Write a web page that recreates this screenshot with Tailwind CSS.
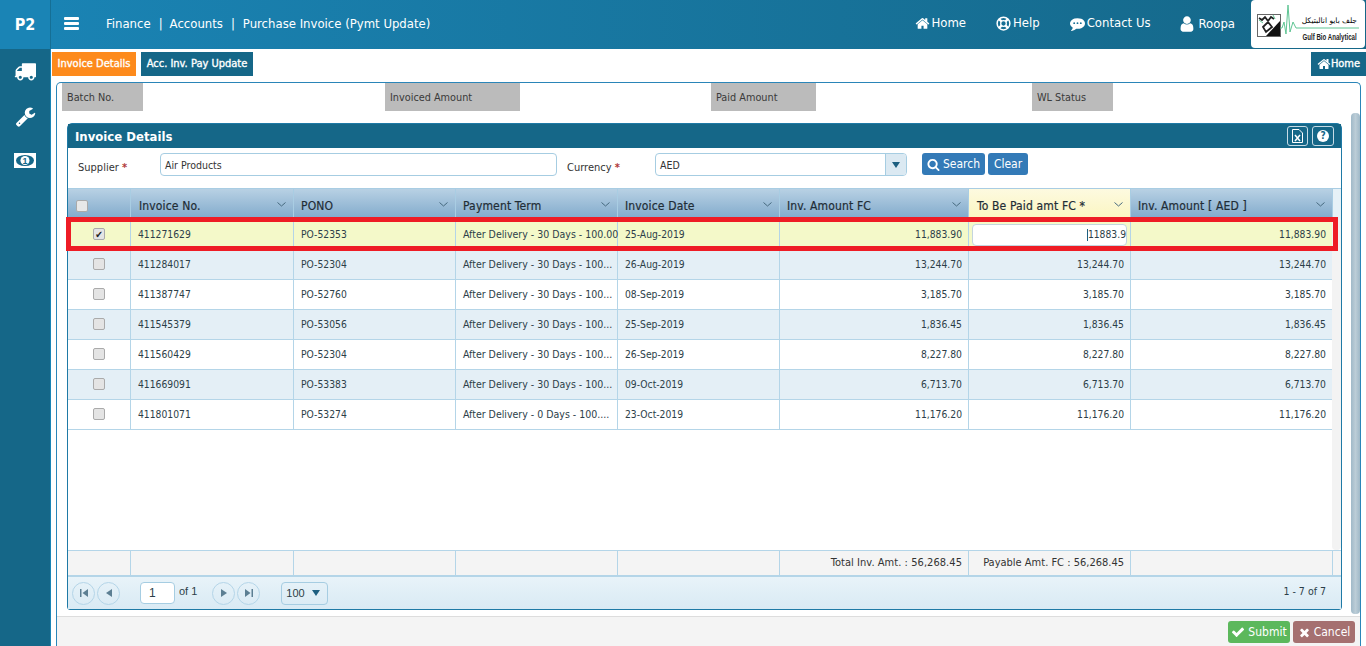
<!DOCTYPE html>
<html lang="en">
<head>
    <meta charset="UTF-8">
    <title>Purchase Invoice (Pymt Update)</title>
    <script src="https://cdn.jsdelivr.net/npm/@tailwindcss/browser@4"></script>
</head>
<body class="h-screen w-screen overflow-hidden bg-white text-[#333] text-[11px] font-['DejaVu_Sans_Condensed','Noto_Sans',sans-serif]">
    <!-- Top bar -->
    <nav class="h-[49px] flex items-stretch text-white bg-gradient-to-r from-[#1a84b5] to-[#156788]">
        <div class="w-[51px] shrink-0 flex items-center justify-center bg-[#1a84b5] border-r border-[#156f95] text-[16px] font-bold">P2</div>
        <svg class="w-[15px] h-[13px] ml-[13px] mt-[17px]" viewBox="0 0 15 13" fill="white"><rect width="15" height="3" rx="1"/><rect y="5" width="15" height="3" rx="1"/><rect y="10" width="15" height="3" rx="1"/></svg>
        <div class="ml-[27px] flex items-center text-[13px] gap-[8px] pb-[1px]">
            <span>Finance</span><span>|</span><span class="-ml-[1px]">Accounts</span><span>|</span><span>Purchase Invoice (Pymt Update)</span>
        </div>
        <div class="ml-auto flex items-center text-[13px] pb-[3px]">
            <svg class="w-[15px] h-[15px]" viewBox="0 0 1792 1792" fill="white"><path d="M1472 992v480q0 26-19 45t-45 19h-384v-384h-256v384h-384q-26 0-45-19t-19-45v-480q0-1 .5-3t.5-3l575-474 575 474q1 2 1 6zm223-69l-62 74q-8 9-21 11h-3q-13 0-21-7l-692-577-692 577q-12 8-24 7-13-2-21-11l-62-74q-8-10-7-23.500t11-21.500l719-599q32-26 76-26t76 26l244 204v-195q0-14 9-23t23-9h192q14 0 23 9t9 23v408l219 182q10 8 11 21.500t-7 23.500z"/></svg>
            <span class="ml-[1px]">Home</span>
            <svg class="w-[15px] h-[15px] ml-[30px]" viewBox="0 0 16 16" fill="none" stroke="white"><circle cx="8" cy="8" r="6.800" stroke-width="1.600"/><circle cx="8" cy="8" r="3" stroke-width="1.400"/><path d="M3.200 3.200L5.800 5.800M12.800 3.200L10.200 5.800M3.200 12.800L5.800 10.200M12.800 12.800L10.200 10.200" stroke-width="2.600"/></svg>
            <span class="ml-[2px]">Help</span>
            <svg class="w-[15px] h-[15px] ml-[30px]" viewBox="0 0 1792 1792"><path fill="white" d="M1792 896q0 174-120 321.500t-326 233-450 85.500q-70 0-145-8-198 175-460 242-49 14-114 22-17 2-30.500-9t-17.500-29v-1q-3-4-.5-12t2-10 4.500-9.500l6-9 7-8.500 8-9q7-8 31-34.500t34.500-38 31-39.500 32.500-51 27-59 26-76q-157-89-247.500-220t-90.500-281q0-130 71-248.500t191-204.500 286-136.500 348-50.500q244 0 450 85.500t326 233 120 321.500z"/><circle cx="500" cy="860" r="110" fill="#166f94"/><circle cx="896" cy="860" r="110" fill="#166f94"/><circle cx="1292" cy="860" r="110" fill="#166f94"/></svg>
            <span class="ml-[2px]">Contact Us</span>
            <svg class="w-[14px] h-[16px] ml-[29px] mt-[2px]" viewBox="200 100 1400 1600" fill="white"><path d="M1536 1399q0 109-62.500 187t-150.500 78h-854q-88 0-150.500-78t-62.500-187q0-85 8.500-160.500t31.500-152 58.500-131 94-89 134.500-34.500q131 128 313 128t313-128q76 0 134.500 34.500t94 89 58.500 131 31.500 152 8.500 160.500zm-256-887q0 159-112.500 271.500t-271.500 112.500-271.500-112.500-112.500-271.500 112.500-271.500 271.500-112.500 271.500 112.500 112.500 271.500z"/></svg>
            <span class="ml-[5px] mt-[2px] mr-[16px]">Roopa</span>
        </div>
        <!-- Logo -->
        <div class="w-[114px] h-[48px] mr-[1px] bg-white rounded-[4px] relative overflow-hidden">
            <svg class="w-[114px] h-[48px] absolute left-0 top-0" viewBox="0 0 114 48" fill="none">
                <rect x="6.500" y="14.500" width="23" height="22" fill="white" stroke="#666"/>
                <path d="M15 36L29 21V36Z" fill="#111"/>
                <path d="M8 18l3 2 3-3 3 4 3-4 3 2M12 27l5-5 4 5-6 5z" stroke="#222" stroke-width="1.800"/>
                <path d="M8 20l4 3M22 15l2 4" stroke="#5fc594"/>
                <path d="M29 28H31L33 22 35 34 37 5 39 32 42 22 45 28H108" stroke="#5fc594"/>
            </svg>
            <span class="absolute right-[8px] top-[16px] text-[7.500px] leading-[10px] text-black whitespace-nowrap font-['DejaVu_Sans',sans-serif]">جلف بايو انالبتيكل</span>
            <span class="absolute right-[8px] top-[31px] text-[9px] leading-[12px] text-[#222] font-bold whitespace-nowrap scale-x-[.68] origin-right font-['Liberation_Sans',sans-serif]">Gulf Bio Analytical</span>
        </div>
    </nav>

    <div class="flex h-[597px]">
        <!-- Side icons -->
        <aside class="w-[51px] shrink-0 bg-[#156788] border-r border-[#1a84b5] flex flex-col items-center">
            <svg class="w-[22px] h-[22px] mt-[11px]" viewBox="0 0 1792 1792" fill="white"><path d="M640 1408q0-52-38-90t-90-38-90 38-38 90 38 90 90 38 90-38 38-90zm-384-512h384v-256h-158q-13 0-22 9l-195 195q-9 9-9 22v30zm1280 512q0-52-38-90t-90-38-90 38-38 90 38 90 90 38 90-38 38-90zm256-1088v1024q0 15-4 26.500t-13.500 18.500-16.500 11.500-23.500 6-22.500 2-25.500 0-22.500-.5q0 106-75 181t-181 75-181-75-75-181h-384q0 106-75 181t-181 75-181-75-75-181h-64q-3 0-22.500.5t-25.500 0-22.500-2-23.500-6-16.500-11.500-13.500-18.500-4-26.500q0-26 19-45t45-19v-320q0-8-.5-35t0-38 2.500-34.500 6.500-37 14-30.500 22.500-30l198-198q19-19 50.500-32t58.500-13h160v-192q0-26 19-45t45-19h1024q26 0 45 19t19 45z"/></svg>
            <svg class="w-[21px] h-[21px] mt-[24px]" viewBox="0 0 1792 1792" fill="white"><path d="M448 1472q0-26-19-45t-45-19-45 19-19 45 19 45 45 19 45-19 19-45zm644-420l-682 682q-37 37-90 37-52 0-91-37l-106-108q-38-36-38-90 0-53 38-91l681-681q39 98 114.500 173.500t173.500 114.500zm634-435q0 39-23 106-47 134-164.500 217.500t-258.500 83.500q-185 0-316.500-131.500t-131.500-316.500 131.500-316.500 316.500-131.500q58 0 121.500 16.500t107.500 46.500q16 11 16 28t-16 28l-293 169v224l193 107q5-3 79-48.500t135.500-81 70.500-35.500q15 0 23.500 10t8.500 25z"/></svg>
            <svg class="w-[22px] h-[15px] mt-[26px]" viewBox="0 0 22 15"><rect width="22" height="15" fill="white"/><ellipse cx="11" cy="7.500" rx="9" ry="5.500" fill="#156788"/><circle cx="11" cy="7.500" r="4.500" fill="white"/><text x="11" y="11" text-anchor="middle" font-size="9" font-weight="700" fill="#156788" font-family="Liberation Sans">1</text></svg>
        </aside>

        <main class="flex-1 min-w-0 pt-[3px] relative">
            <!-- Tabs -->
            <div class="flex h-[24px] pl-[1px] text-white text-[11px] whitespace-nowrap [-webkit-text-stroke:0.35px_white]">
                <div class="w-[84px] bg-[#fd8a1c] flex items-center justify-center">Invoice Details</div>
                <div class="w-[112px] ml-[5px] bg-[#156788] flex items-center justify-center">Acc. Inv. Pay Update</div>
                <div class="w-[55px] ml-auto bg-[#156788] flex items-center justify-center">
                    <svg class="w-[14px] h-[14px]" viewBox="0 0 1792 1792" fill="white"><path d="M1472 992v480q0 26-19 45t-45 19h-384v-384h-256v384h-384q-26 0-45-19t-19-45v-480q0-1 .5-3t.5-3l575-474 575 474q1 2 1 6zm223-69l-62 74q-8 9-21 11h-3q-13 0-21-7l-692-577-692 577q-12 8-24 7-13-2-21-11l-62-74q-8-10-7-23.500t11-21.500l719-599q32-26 76-26t76 26l244 204v-195q0-14 9-23t23-9h192q14 0 23 9t9 23v408l219 182q10 8 11 21.500t-7 23.500z"/></svg>
                    <span>Home</span>
                </div>
            </div>

            <!-- Outer panel -->
            <div class="mt-[6px] ml-[5px] w-[1305px] h-[564px] border border-[#2a85b8] border-b-0 rounded-t-[5px] relative">
                <!-- Scrollbar -->
                <div class="absolute right-[0px] top-[30px] w-[9px] h-[501px] rounded-[4px] bg-gradient-to-r from-[#a0b9c8] via-[#bccdd7] to-[#a0b9c8]"></div>

                <div class="grid grid-cols-[323px_326px_321px_200px] pl-[5px] h-[28px] text-[10.800px] text-[#3a3a3a]">
                    <div class="w-[81px] bg-[#bbbbbb] pl-[5px] pt-[2px] flex items-center">Batch No.</div>
                    <div class="w-[135px] bg-[#bbbbbb] pl-[5px] pt-[2px] flex items-center">Invoiced Amount</div>
                    <div class="w-[105px] bg-[#bbbbbb] pl-[5px] pt-[2px] flex items-center">Paid Amount</div>
                    <div class="w-[81px] bg-[#bbbbbb] pl-[5px] pt-[2px] flex items-center">WL Status</div>
                </div>

                <!-- Card -->
                <div class="mt-[12px] ml-[10px] w-[1275px] h-[487px] border border-[#1f7aa6] rounded-t-[5px] rounded-b-[3px] relative flex flex-col">
                    <div class="h-[24px] shrink-0 bg-[#156788] text-white text-[13px] font-bold flex items-center pl-[7px]">
                        <span class="mt-[1px]">Invoice Details</span>
                        <div class="ml-auto mr-[7px] flex gap-[4px]">
                            <div class="w-[21px] h-[20px] border border-[#c6dbe6] rounded-[3px] flex items-center justify-center">
                                <svg class="w-[11px] h-[14px]" viewBox="0 0 11 14" fill="none" stroke="white"><path d="M1 .5H7L10.500 4V13.500H.5V.5Z"/><path d="M3 6l5 6M8 6l-5 6" stroke-width="1.500"/></svg>
                            </div>
                            <div class="w-[22px] h-[20px] border border-[#c6dbe6] rounded-[3px] flex items-center justify-center">
                                <span class="w-[12px] h-[12px] rounded-full bg-white text-[#156788] text-[10px] leading-[12px] text-center font-bold">?</span>
                            </div>
                        </div>
                    </div>

                    <!-- Filter row -->
                    <div class="h-[40px] shrink-0 flex pt-[5px] relative">
                        <span class="ml-[10px] w-[82px] mt-[7px]">Supplier <b class="text-[#b03a3a]">*</b></span>
                        <div class="w-[397px] h-[23px] border border-[#a6cde2] rounded-[4px] pl-[4px] pt-[2px] flex items-center text-[10.500px]">Air Products</div>
                        <span class="ml-[10px] w-[88px] mt-[7px]">Currency <b class="text-[#b03a3a]">*</b></span>
                        <div class="w-[252px] h-[23px] border border-[#a6cde2] rounded-[4px] pl-[4px] pt-[2px] flex items-center relative text-[10.500px]">
                            AED
                            <div class="absolute right-0 top-0 bottom-0 w-[21px] bg-[#dbe9f2] border-l border-[#a6cde2] flex items-center justify-center rounded-r-[3px]">
                                <span class="w-0 h-0 border-x-[4px] border-x-transparent border-t-[6px] border-t-[#1d5f80]"></span>
                            </div>
                        </div>
                        <div class="ml-[15px] w-[63px] h-[22px] bg-[#337ab7] rounded-[3px] text-white text-[12px] flex items-center justify-center gap-[3px]">
                            <svg class="w-[13px] h-[13px]" viewBox="0 0 1792 1792" fill="white"><path d="M1216 832q0-185-131.500-316.500t-316.500-131.500-316.500 131.500-131.500 316.500 131.500 316.500 316.500 131.500 316.500-131.500 131.500-316.500zm512 832q0 52-38 90t-90 38q-54 0-90-38l-343-342q-179 124-399 124-143 0-273.500-55.500t-225-150-150-225-55.500-273.500 55.500-273.500 150-225 225-150 273.500-55.500 273.500 55.500 225 150 150 225 55.500 273.500q0 220-124 399l343 343q37 37 37 90z"/></svg>
                            Search
                        </div>
                        <div class="ml-[3px] w-[40px] h-[22px] bg-[#337ab7] rounded-[3px] text-white text-[12px] flex items-center justify-center">Clear</div>
                    </div>

                    <!-- Grid -->
                    <div class="flex-1 relative flex flex-col min-h-0">
                        <div class="grid grid-cols-[63px_163px_162px_162px_162px_189px_162px_202px_1fr] h-[32px] shrink-0 text-[12px] tracking-[.15px] text-[#1f2d36] [-webkit-text-stroke:0.2px_#1f2d36] bg-gradient-to-b from-[#b8d1e4] to-[#7ea8ca] border-t border-[#a9cde3] [&>div]:pt-[2px]">
                            <div class="border-r border-[#a9cde3] flex items-center pl-[8px]"><span class="w-[12px] h-[12px] rounded-[2px] border border-[#aaa] bg-[#e8e8e8]"></span></div>
                            <div class="border-r border-[#a9cde3] flex items-center pl-[8px] justify-between pr-[7px]">Invoice No.<svg class="w-[9px] h-[5px] mb-[3px]" viewBox="0 0 9 5" fill="none" stroke="#47697f"><path d="M.5.5L4.500 4 8.500.5"/></svg></div>
                            <div class="border-r border-[#a9cde3] flex items-center pl-[7px] justify-between pr-[7px]">PONO<svg class="w-[9px] h-[5px] mb-[3px]" viewBox="0 0 9 5" fill="none" stroke="#47697f"><path d="M.5.5L4.500 4 8.500.5"/></svg></div>
                            <div class="border-r border-[#a9cde3] flex items-center pl-[7px] justify-between pr-[7px]">Payment Term<svg class="w-[9px] h-[5px] mb-[3px]" viewBox="0 0 9 5" fill="none" stroke="#47697f"><path d="M.5.5L4.500 4 8.500.5"/></svg></div>
                            <div class="border-r border-[#a9cde3] flex items-center pl-[7px] justify-between pr-[7px]">Invoice Date<svg class="w-[9px] h-[5px] mb-[3px]" viewBox="0 0 9 5" fill="none" stroke="#47697f"><path d="M.5.5L4.500 4 8.500.5"/></svg></div>
                            <div class="border-r border-[#a9cde3] flex items-center pl-[7px] justify-between pr-[7px]">Inv. Amount FC<svg class="w-[9px] h-[5px] mb-[3px]" viewBox="0 0 9 5" fill="none" stroke="#47697f"><path d="M.5.5L4.500 4 8.500.5"/></svg></div>
                            <div class="border-r border-[#a9cde3] flex items-center pl-[8px] justify-between pr-[7px] bg-gradient-to-b from-[#fdfae0] to-[#fbf5bf]">To Be Paid amt FC *<svg class="w-[9px] h-[5px] mb-[3px]" viewBox="0 0 9 5" fill="none" stroke="#47697f"><path d="M.5.5L4.500 4 8.500.5"/></svg></div>
                            <div class="border-r border-[#a9cde3] flex items-center pl-[7px] justify-between pr-[7px]">Inv. Amount [ AED ]<svg class="w-[9px] h-[5px] mb-[3px]" viewBox="0 0 9 5" fill="none" stroke="#47697f"><path d="M.5.5L4.500 4 8.500.5"/></svg></div>
                            <div class="bg-[#e6f1f7]"></div>
                        </div>

                        <div class="flex-1 relative">
                            <!-- Grid scrollbar -->
                            <div class="absolute right-0 top-0 bottom-0 w-[9px] bg-[#f3f3f3] rounded-b-[4px]"></div>
                            <div class="w-[1265px] text-[10.250px] text-[#2c3e48]">
                                <div class="grid grid-cols-[63px_163px_162px_162px_162px_189px_162px_202px] h-[30px] items-stretch bg-[#f4f9c9] border-b border-[#b4d5e8] [&>div]:border-r [&>div]:border-[#b4d5e8] [&>div]:flex [&>div]:items-center [&>div]:pl-[7px] [&>div]:pt-[1px]">
                                    <div class="justify-center pl-[0px]! pt-0! pb-[1px]"><span class="w-[12px] h-[12px] rounded-[2px] border border-[#aaa] bg-[#e4e4e4] text-[10px] leading-[11px] text-center text-[#222]">✔</span></div>
                                    <div>411271629</div><div>PO-52353</div><div class="whitespace-nowrap text-[10.500px]">After Delivery - 30 Days - 100.00</div><div>25-Aug-2019</div>
                                    <div class="justify-end pr-[6px]">11,883.90</div>
                                    <div class="px-[3px]! pt-0!"><div class="w-full h-[22px] bg-white border border-[#c4d5de] rounded-[4px] flex items-center justify-end"><span class="w-px h-[12px] bg-[#1d5f80]"></span>11883.9</div></div>
                                    <div class="justify-end pr-[6px]">11,883.90</div>
                                </div>
                                <div class="grid grid-cols-[63px_163px_162px_162px_162px_189px_162px_202px] h-[30px] items-stretch bg-[#e4eff6] border-b border-[#b4d5e8] [&>div]:border-r [&>div]:border-[#b4d5e8] [&>div]:flex [&>div]:items-center [&>div]:pl-[7px] [&>div]:pt-[1px]">
                                    <div class="justify-center pl-[0px]! pt-0! pb-[1px]"><span class="w-[12px] h-[12px] rounded-[2px] border border-[#aaa] bg-[#e4e4e4]"></span></div>
                                    <div>411284017</div><div>PO-52304</div><div class="whitespace-nowrap text-[10.500px]">After Delivery - 30 Days - 100...</div><div>26-Aug-2019</div>
                                    <div class="justify-end pr-[6px]">13,244.70</div><div class="justify-end pr-[6px]">13,244.70</div><div class="justify-end pr-[6px]">13,244.70</div>
                                </div>
                                <div class="grid grid-cols-[63px_163px_162px_162px_162px_189px_162px_202px] h-[30px] items-stretch bg-white border-b border-[#b4d5e8] [&>div]:border-r [&>div]:border-[#b4d5e8] [&>div]:flex [&>div]:items-center [&>div]:pl-[7px] [&>div]:pt-[1px]">
                                    <div class="justify-center pl-[0px]! pt-0! pb-[1px]"><span class="w-[12px] h-[12px] rounded-[2px] border border-[#aaa] bg-[#e4e4e4]"></span></div>
                                    <div>411387747</div><div>PO-52760</div><div class="whitespace-nowrap text-[10.500px]">After Delivery - 30 Days - 100...</div><div>08-Sep-2019</div>
                                    <div class="justify-end pr-[6px]">3,185.70</div><div class="justify-end pr-[6px]">3,185.70</div><div class="justify-end pr-[6px]">3,185.70</div>
                                </div>
                                <div class="grid grid-cols-[63px_163px_162px_162px_162px_189px_162px_202px] h-[30px] items-stretch bg-[#e4eff6] border-b border-[#b4d5e8] [&>div]:border-r [&>div]:border-[#b4d5e8] [&>div]:flex [&>div]:items-center [&>div]:pl-[7px] [&>div]:pt-[1px]">
                                    <div class="justify-center pl-[0px]! pt-0! pb-[1px]"><span class="w-[12px] h-[12px] rounded-[2px] border border-[#aaa] bg-[#e4e4e4]"></span></div>
                                    <div>411545379</div><div>PO-53056</div><div class="whitespace-nowrap text-[10.500px]">After Delivery - 30 Days - 100...</div><div>25-Sep-2019</div>
                                    <div class="justify-end pr-[6px]">1,836.45</div><div class="justify-end pr-[6px]">1,836.45</div><div class="justify-end pr-[6px]">1,836.45</div>
                                </div>
                                <div class="grid grid-cols-[63px_163px_162px_162px_162px_189px_162px_202px] h-[30px] items-stretch bg-white border-b border-[#b4d5e8] [&>div]:border-r [&>div]:border-[#b4d5e8] [&>div]:flex [&>div]:items-center [&>div]:pl-[7px] [&>div]:pt-[1px]">
                                    <div class="justify-center pl-[0px]! pt-0! pb-[1px]"><span class="w-[12px] h-[12px] rounded-[2px] border border-[#aaa] bg-[#e4e4e4]"></span></div>
                                    <div>411560429</div><div>PO-52304</div><div class="whitespace-nowrap text-[10.500px]">After Delivery - 30 Days - 100...</div><div>26-Sep-2019</div>
                                    <div class="justify-end pr-[6px]">8,227.80</div><div class="justify-end pr-[6px]">8,227.80</div><div class="justify-end pr-[6px]">8,227.80</div>
                                </div>
                                <div class="grid grid-cols-[63px_163px_162px_162px_162px_189px_162px_202px] h-[30px] items-stretch bg-[#e4eff6] border-b border-[#b4d5e8] [&>div]:border-r [&>div]:border-[#b4d5e8] [&>div]:flex [&>div]:items-center [&>div]:pl-[7px] [&>div]:pt-[1px]">
                                    <div class="justify-center pl-[0px]! pt-0! pb-[1px]"><span class="w-[12px] h-[12px] rounded-[2px] border border-[#aaa] bg-[#e4e4e4]"></span></div>
                                    <div>411669091</div><div>PO-53383</div><div class="whitespace-nowrap text-[10.500px]">After Delivery - 30 Days - 100...</div><div>09-Oct-2019</div>
                                    <div class="justify-end pr-[6px]">6,713.70</div><div class="justify-end pr-[6px]">6,713.70</div><div class="justify-end pr-[6px]">6,713.70</div>
                                </div>
                                <div class="grid grid-cols-[63px_163px_162px_162px_162px_189px_162px_202px] h-[30px] items-stretch bg-white border-b border-[#b4d5e8] [&>div]:border-r [&>div]:border-[#b4d5e8] [&>div]:flex [&>div]:items-center [&>div]:pl-[7px] [&>div]:pt-[1px]">
                                    <div class="justify-center pl-[0px]! pt-0! pb-[1px]"><span class="w-[12px] h-[12px] rounded-[2px] border border-[#aaa] bg-[#e4e4e4]"></span></div>
                                    <div>411801071</div><div>PO-53274</div><div class="whitespace-nowrap text-[10.500px]">After Delivery - 0 Days - 100....</div><div>23-Oct-2019</div>
                                    <div class="justify-end pr-[6px]">11,176.20</div><div class="justify-end pr-[6px]">11,176.20</div><div class="justify-end pr-[6px]">11,176.20</div>
                                </div>
                            </div>
                        </div>

                        <!-- Totals row -->
                        <div class="grid grid-cols-[63px_163px_162px_162px_162px_189px_162px_202px_1fr] h-[27px] shrink-0 bg-[#f4f4f4] border-t border-b-[2px] border-[#b4d5e8] [&>div]:border-r [&>div]:border-[#b4d5e8] [&>div]:flex [&>div]:items-center [&>div]:justify-end [&>div]:pr-[6px]">
                            <div></div><div></div><div></div><div></div><div></div>
                            <div class="tracking-[.05px]">Total Inv. Amt. : 56,268.45</div>
                            <div>Payable Amt. FC : 56,268.45</div>
                            <div></div>
                            <div class="border-r-0!"></div>
                        </div>

                        <!-- Pager -->
                        <div class="h-[32px] shrink-0 flex items-center bg-gradient-to-b from-[#e8f3f9] to-[#d9eaf4] pl-[4px] font-['Liberation_Sans',sans-serif] text-[#2c3e48] text-[11px]">
                            <span class="w-[23px] h-[23px] rounded-full border border-[#b4d5e8] flex items-center justify-center"><svg class="w-[8px] h-[8px]" viewBox="0 0 8 8" fill="#5c7f93"><path d="M0 0H1.500V8H0ZM8 0V8L2.500 4Z"/></svg></span>
                            <span class="w-[23px] h-[23px] ml-[2px] rounded-full border border-[#b4d5e8] flex items-center justify-center"><svg class="w-[6px] h-[8px]" viewBox="0 0 6 8" fill="#5c7f93"><path d="M6 0V8L0 4Z"/></svg></span>
                            <div class="w-[35px] h-[22px] ml-[20px] bg-white border border-[#a6cde2] rounded-[4px] pl-[8px] flex items-center text-[12px]">1</div>
                            <span class="ml-[4px] mb-[3px] text-[11px]">of 1</span>
                            <span class="w-[23px] h-[23px] ml-[15px] rounded-full border border-[#b4d5e8] flex items-center justify-center"><svg class="w-[6px] h-[8px]" viewBox="0 0 6 8" fill="#5c7f93"><path d="M0 0V8L6 4Z"/></svg></span>
                            <span class="w-[23px] h-[23px] ml-[2px] rounded-full border border-[#b4d5e8] flex items-center justify-center"><svg class="w-[8px] h-[8px]" viewBox="0 0 8 8" fill="#5c7f93"><path d="M0 0V8L5.500 4ZM6.500 0H8V8H6.500Z"/></svg></span>
                            <div class="w-[47px] h-[23px] ml-[21px] border border-[#a6cde2] rounded-[4px] pl-[4px] pr-[7px] flex items-center justify-between text-[11px]">100<span class="w-0 h-0 border-x-[4px] border-x-transparent border-t-[6px] border-t-[#1d5f80]"></span></div>
                            <span class="ml-auto mr-[15px] mb-[2px] text-[10.500px] font-['DejaVu_Sans_Condensed','Noto_Sans',sans-serif]">1 - 7 of 7</span>
                        </div>

                        <!-- Selected row highlight -->
                        <div class="absolute left-[-2px] top-[29px] w-[1272px] h-[34px] border-[5px] border-[#ee1c25] pointer-events-none"></div>
                    </div>
                </div>

                <!-- Footer actions -->
                <div class="absolute left-0 right-0 bottom-0 h-[30px] bg-[#f4f4f4] border-t border-[#dddddd] flex justify-end items-start pt-[4px] pr-[5px] gap-[3px] text-white text-[12px]">
                    <div class="w-[62px] h-[22px] bg-[#5cb85c] rounded-[3px] flex items-center justify-center gap-[3px]">
                        <svg class="w-[14px] h-[14px]" viewBox="0 0 1792 1792" fill="white"><path d="M1671 566q0 40-28 68l-724 724-136 136q-28 28-68 28t-68-28l-136-136-362-362q-28-28-28-68t28-68l136-136q28-28 68-28t68 28l294 295 656-657q28-28 68-28t68 28l136 136q28 28 28 68z"/></svg>
                        Submit
                    </div>
                    <div class="w-[62px] h-[22px] bg-[#a57070] rounded-[3px] flex items-center justify-center gap-[3px]">
                        <svg class="w-[13px] h-[13px]" viewBox="0 0 1792 1792" fill="white"><path d="M1490 1322q0 40-28 68l-136 136q-28 28-68 28t-68-28l-294-294-294 294q-28 28-68 28t-68-28l-136-136q-28-28-28-68t28-68l294-294-294-294q-28-28-28-68t28-68l136-136q28-28 68-28t68 28l294 294 294-294q28-28 68-28t68 28l136 136q28 28 28 68t-28 68l-294 294 294 294q28 28 28 68z"/></svg>
                        Cancel
                    </div>
                </div>
            </div>
        </main>
    </div>
</body>
</html>
